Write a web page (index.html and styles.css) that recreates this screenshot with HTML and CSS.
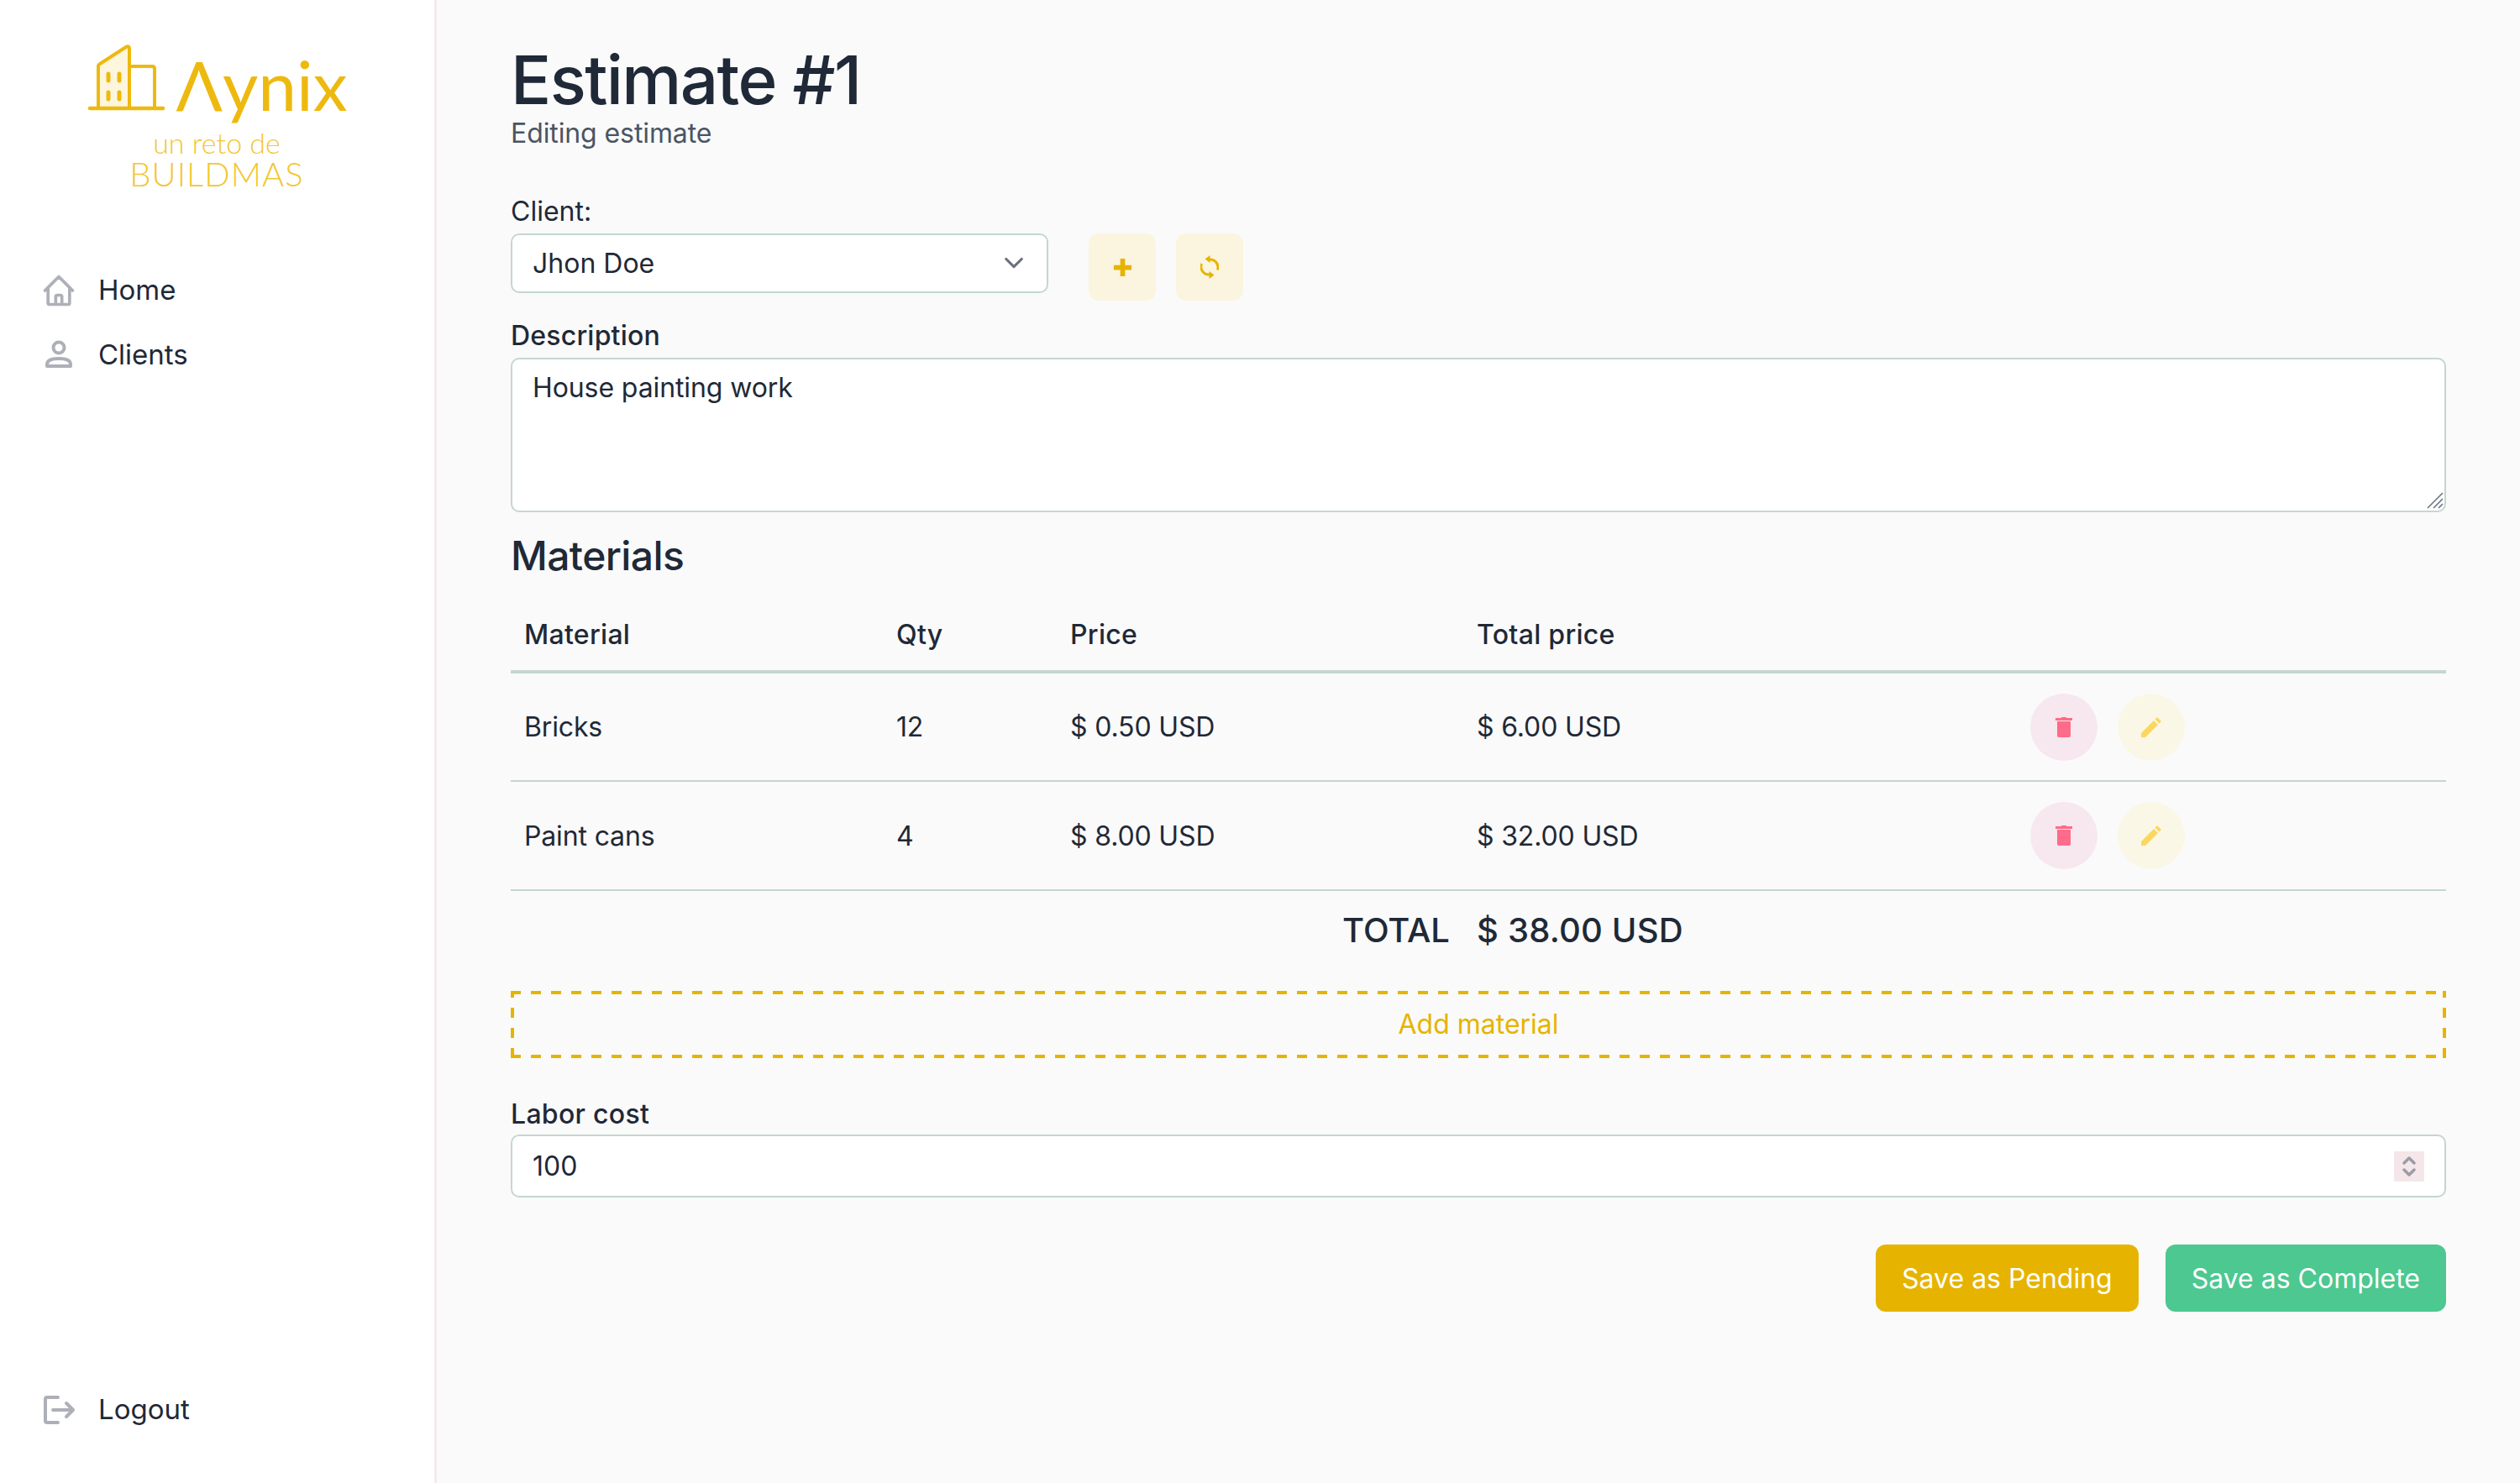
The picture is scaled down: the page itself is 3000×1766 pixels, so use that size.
FILE: index.html
```html
<!DOCTYPE html>
<html lang="en">
<head>
<meta charset="utf-8">
<title>Estimate #1</title>
<link rel="stylesheet" href="styles.css">
</head>
<body>
<div class="app">
  <aside class="sidebar">
    <div class="logo">
      <div class="logo-main">
        <svg class="logo-mark" viewBox="0 0 95 80" fill="none" stroke="#eeb90f" stroke-width="4" stroke-linejoin="round" stroke-linecap="round">
          <path d="M14 77V27Q14 25 16 24L47 4Q51 2 51 6V77Z" fill="#fdf6dc"/>
          <path d="M51 27H78Q81 27 81 30V77"/>
          <path d="M4 77H91" stroke-width="4.500"/>
          <path d="M26 36v8M39 36v8M26 58v8M39 58v8" stroke-width="5"/>
        </svg>
        <span class="logo-word">Λynix</span>
      </div>
      <div class="logo-sub">un reto de</div>
      <div class="logo-brand">BUILDMAS</div>
    </div>
    <nav class="nav">
      <a class="nav-item">
        <svg class="nav-icon" viewBox="-1.100 -1.100 26.200 26.200" fill="none" stroke="currentColor" stroke-width="2" stroke-linecap="round" stroke-linejoin="round"><path d="M3 12l2-2m0 0l7-7 7 7M5 10v10a1 1 0 001 1h3m10-11l2 2m-2-2v10a1 1 0 01-1 1h-3m-6 0a1 1 0 001-1v-4a1 1 0 011-1h2a1 1 0 011 1v4a1 1 0 001 1m-6 0h6"/></svg>
        <span>Home</span>
      </a>
      <a class="nav-item">
        <svg class="nav-icon" viewBox="0 0 48 48" fill="none" stroke="currentColor" stroke-width="4" stroke-linejoin="round"><circle cx="24" cy="15" r="6.500"/><path d="M10 37v-2c0-5 6-7 14-7s14 2 14 7v2z"/></svg>
        <span>Clients</span>
      </a>
    </nav>
    <a class="nav-item logout">
      <svg class="nav-icon" viewBox="0 0 48 48" fill="none" stroke="currentColor" stroke-width="4" stroke-linecap="round" stroke-linejoin="round"><path d="M23 9H10a2 2 0 0 0-2 2v26a2 2 0 0 0 2 2h13M17 24h24M33 16l8 8-8 8"/></svg>
      <span>Logout</span>
    </a>
  </aside>
  <main class="main">
    <h1 class="title">Estimate #1</h1>
    <p class="subtitle">Editing estimate</p>

    <label class="label label-client">Client:</label>
    <div class="client-row">
      <div class="select-wrap">
        <select class="control select"><option>Jhon Doe</option></select>
        <svg class="select-chevron" viewBox="0 0 24 24" fill="none" stroke="#6b7280" stroke-width="2.600" stroke-linecap="round" stroke-linejoin="round"><path d="M4 8l8 8 8-8"/></svg>
      </div>
      <button class="square-btn">
        <svg class="btn-icon" viewBox="0 0 24 24" fill="none" stroke="#e6b400" stroke-width="6"><path d="M12 1v22M1 12h22"/></svg>
      </button>
      <button class="square-btn">
        <svg class="sync-icon" viewBox="0 0 22 28" fill="none" stroke="#e6b400" stroke-width="3"><path d="M11 5A9.500 9.500 0 0 1 20.500 17.500M11 23A9.500 9.500 0 0 1 1.500 10"/><path d="M5.500 4.500L11.500 0v9zM16.500 23.500L10.500 19v9z" fill="#e6b400" stroke="none"/></svg>
      </button>
    </div>

    <label class="label label-desc">Description</label>
    <div class="area-wrap">
      <textarea class="control area">House painting work</textarea>
      <svg class="resizer" viewBox="0 0 20 20" fill="none" stroke="#6b7280" stroke-width="1.600"><path d="M1 19L19 1M8 19L19 8M14 19l5-5"/></svg>
    </div>

    <h2 class="section">Materials</h2>
    <table class="table">
      <colgroup>
        <col class="c-material"><col class="c-qty"><col class="c-price"><col class="c-total"><col class="c-actions">
      </colgroup>
      <thead>
        <tr><th>Material</th><th>Qty</th><th>Price</th><th>Total price</th><th></th></tr>
      </thead>
      <tbody>
        <tr>
          <td>Bricks</td><td>12</td><td>$ 0.50 USD</td><td>$ 6.00 USD</td>
          <td>
            <div class="actions">
              <button class="round-btn danger"><svg class="trash" viewBox="0 0 20 24" fill="#ff6b8a"><path d="M7 0h6v1h7v3H0V1h7zM2 5h16v17a2 2 0 0 1-2 2H4a2 2 0 0 1-2-2z"/></svg></button>
              <button class="round-btn warn"><svg class="pencil" viewBox="0 0 24 24" fill="#fbd75e"><path d="M0 24v-5L15 4l5 5L5 24zM16.500 2.500L19 0l5 5-2.500 2.500z"/></svg></button>
            </div>
          </td>
        </tr>
        <tr>
          <td>Paint cans</td><td>4</td><td>$ 8.00 USD</td><td>$ 32.00 USD</td>
          <td>
            <div class="actions">
              <button class="round-btn danger"><svg class="trash" viewBox="0 0 20 24" fill="#ff6b8a"><path d="M7 0h6v1h7v3H0V1h7zM2 5h16v17a2 2 0 0 1-2 2H4a2 2 0 0 1-2-2z"/></svg></button>
              <button class="round-btn warn"><svg class="pencil" viewBox="0 0 24 24" fill="#fbd75e"><path d="M0 24v-5L15 4l5 5L5 24zM16.500 2.500L19 0l5 5-2.500 2.500z"/></svg></button>
            </div>
          </td>
        </tr>
      </tbody>
      <tfoot>
        <tr><td colspan="3" class="total-label">TOTAL</td><td colspan="2" class="total-value">$ 38.00 USD</td></tr>
      </tfoot>
    </table>

    <button class="add-btn">Add material</button>

    <label class="label label-labor">Labor cost</label>
    <div class="number-wrap">
      <input class="control number" type="text" value="100">
      <span class="spinner">
        <svg viewBox="0 0 36 36" fill="none" stroke="#9a9ca6" stroke-width="3.500" stroke-linecap="round" stroke-linejoin="round"><path d="M12 14l6-6 6 6M12 22l6 6 6-6"/></svg>
      </span>
    </div>

    <div class="footer-actions">
      <button class="save pending">Save as Pending</button>
      <button class="save complete">Save as Complete</button>
    </div>
  </main>
</div>
</body>
</html>
```
FILE: styles.css
```css
* { box-sizing: border-box; }
html, body { margin: 0; height: 100%; }
body {
  font-family: Inter, "Liberation Sans", sans-serif;
  font-size: 32px;
  color: #1f2937;
  background: #fafafa;
}
.app { display: flex; height: 1766px; overflow: hidden; }

/* Sidebar */
.sidebar {
  width: 520px;
  flex: none;
  background: #fff;
  border-right: 3px solid #f5e9ed;
  display: flex;
  flex-direction: column;
  padding: 50px 0 57px 46px;
}
.logo {
  width: 424px;
  display: flex;
  flex-direction: column;
  align-items: center;
  color: #f3c62e;
}
.logo-main { display: flex; align-items: flex-start; gap: 12px; height: 100px; }
.logo-mark { width: 95px; height: 80px; flex: none; margin-top: 2px; }
.logo-word {
  font-family: Lato, sans-serif;
  font-weight: 400;
  font-size: 82px;
  line-height: 100px;
  color: #eeb90f;
}
.logo-sub {
  font-family: Lato, sans-serif;
  font-weight: 300;
  font-size: 34px;
  line-height: 34px;
  margin-top: 3px;
}
.logo-brand {
  font-family: Lato, sans-serif;
  font-weight: 300;
  font-size: 40px;
  line-height: 40px;
  letter-spacing: 1px;
}
.nav { display: flex; flex-direction: column; gap: 16px; margin-top: 88px; }
.nav-item {
  display: flex;
  align-items: center;
  gap: 23px;
  height: 61px;
  line-height: 61px;
  font-size: 33px;
}
.nav-icon { width: 48px; height: 48px; flex: none; color: #aeb0b8; }
.logout { margin-top: auto; }

/* Main */
.main {
  flex: 1;
  min-width: 0;
  padding: 50px 88px 0 88px;
  display: flex;
  flex-direction: column;
}
.title { margin: 0; font-size: 80px; line-height: 89px; font-weight: 500; letter-spacing: -1.600px; }
.subtitle { margin: 0; color: #4b5563; line-height: 40px; letter-spacing: -0.100px; }
.label { display: block; line-height: 40px; margin-bottom: 6px; }
.label-client { margin-top: 53px; }
.label-desc { margin-top: 22px; font-weight: 500; letter-spacing: 0.200px; }
.label-labor { margin-top: 47px; margin-bottom: 4px; font-weight: 500; letter-spacing: 0.300px; }

.control {
  display: block;
  width: 100%;
  font: inherit;
  color: inherit;
  background: #fff;
  border: 2px solid #c5d6d1;
  border-radius: 10px;
  padding: 0 24px;
  outline: none;
}
.client-row { display: flex; align-items: flex-start; gap: 24px; }
.select-wrap { position: relative; width: 640px; margin-right: 24px; }
.select { height: 71px; appearance: none; }
.select-chevron { position: absolute; right: 27px; top: 21px; width: 28px; height: 28px; pointer-events: none; }
.square-btn {
  width: 80px;
  height: 80px;
  border: 0;
  border-radius: 12px;
  background: #fbf5df;
  display: flex;
  align-items: center;
  justify-content: center;
  padding: 0;
}
.btn-icon { width: 23px; height: 23px; }
.sync-icon { width: 22px; height: 28px; }

.area-wrap { position: relative; }
.area { height: 184px; padding: 14px 24px; resize: none; line-height: 40px; letter-spacing: -0.100px; }
.resizer { position: absolute; right: 3px; bottom: 4px; width: 20px; height: 20px; pointer-events: none; }

.section { margin: 24px 0 0; font-size: 48px; line-height: 56px; font-weight: 500; letter-spacing: -0.600px; }
.table { width: 100%; border-collapse: collapse; table-layout: fixed; margin-top: 16px; }
.c-material { width: 443px; }
.c-qty { width: 207px; }
.c-price { width: 484px; }
.c-total { width: 658px; }
.table th {
  text-align: left;
  font-weight: 500;
  height: 94px;
  padding: 6px 16px 0;
  border-bottom: 4px solid #c5d6d1;
  letter-spacing: 0.300px;
}
.table tbody td {
  height: 130px;
  padding: 0 16px;
  border-bottom: 2px solid #c5d6d1;
  letter-spacing: -0.150px;
}
.actions { display: flex; gap: 24px; margin-left: 1px; }
.round-btn {
  width: 80px;
  height: 80px;
  border: 0;
  border-radius: 50%;
  padding: 0;
  display: flex;
  align-items: center;
  justify-content: center;
}
.danger { background: #f6e8ee; }
.warn { background: #fbf7e6; }
.trash { width: 20px; height: 24px; }
.pencil { width: 24px; height: 24px; }

.table tfoot td {
  height: 94px;
  padding: 0 16px;
  font-size: 40px;
  font-weight: 500;
}
.total-label { text-align: right; }
.table .total-value { letter-spacing: 0.200px; }

.add-btn {
  height: 80px;
  margin-top: 26px;
  border: 0;
  background:
    repeating-linear-gradient(90deg, #e6b400 0 12px, transparent 12px 24px) top left / 100% 4px no-repeat,
    repeating-linear-gradient(90deg, #e6b400 0 12px, transparent 12px 24px) bottom left / 100% 4px no-repeat,
    repeating-linear-gradient(0deg, #e6b400 0 12px, transparent 12px 24px) top left / 4px 100% no-repeat,
    repeating-linear-gradient(0deg, #e6b400 0 12px, transparent 12px 24px) top right / 4px 100% no-repeat;
  color: #e6b400;
  font: inherit;
  padding: 0 0 2px;
}

.number-wrap { position: relative; }
.number { height: 75px; }
.spinner {
  position: absolute;
  right: 26px;
  top: 20px;
  width: 36px;
  height: 36px;
  background: #f5e6ea;
  display: block;
}
.spinner svg { display: block; width: 36px; height: 36px; }

.footer-actions { display: flex; justify-content: flex-end; gap: 32px; margin-top: 56px; }
.save {
  height: 80px;
  padding: 0 31px;
  border: 0;
  border-radius: 12px;
  color: #fff;
  font: inherit;
}
.pending { background: #e6b400; }
.complete { background: #4cc890; }
```
